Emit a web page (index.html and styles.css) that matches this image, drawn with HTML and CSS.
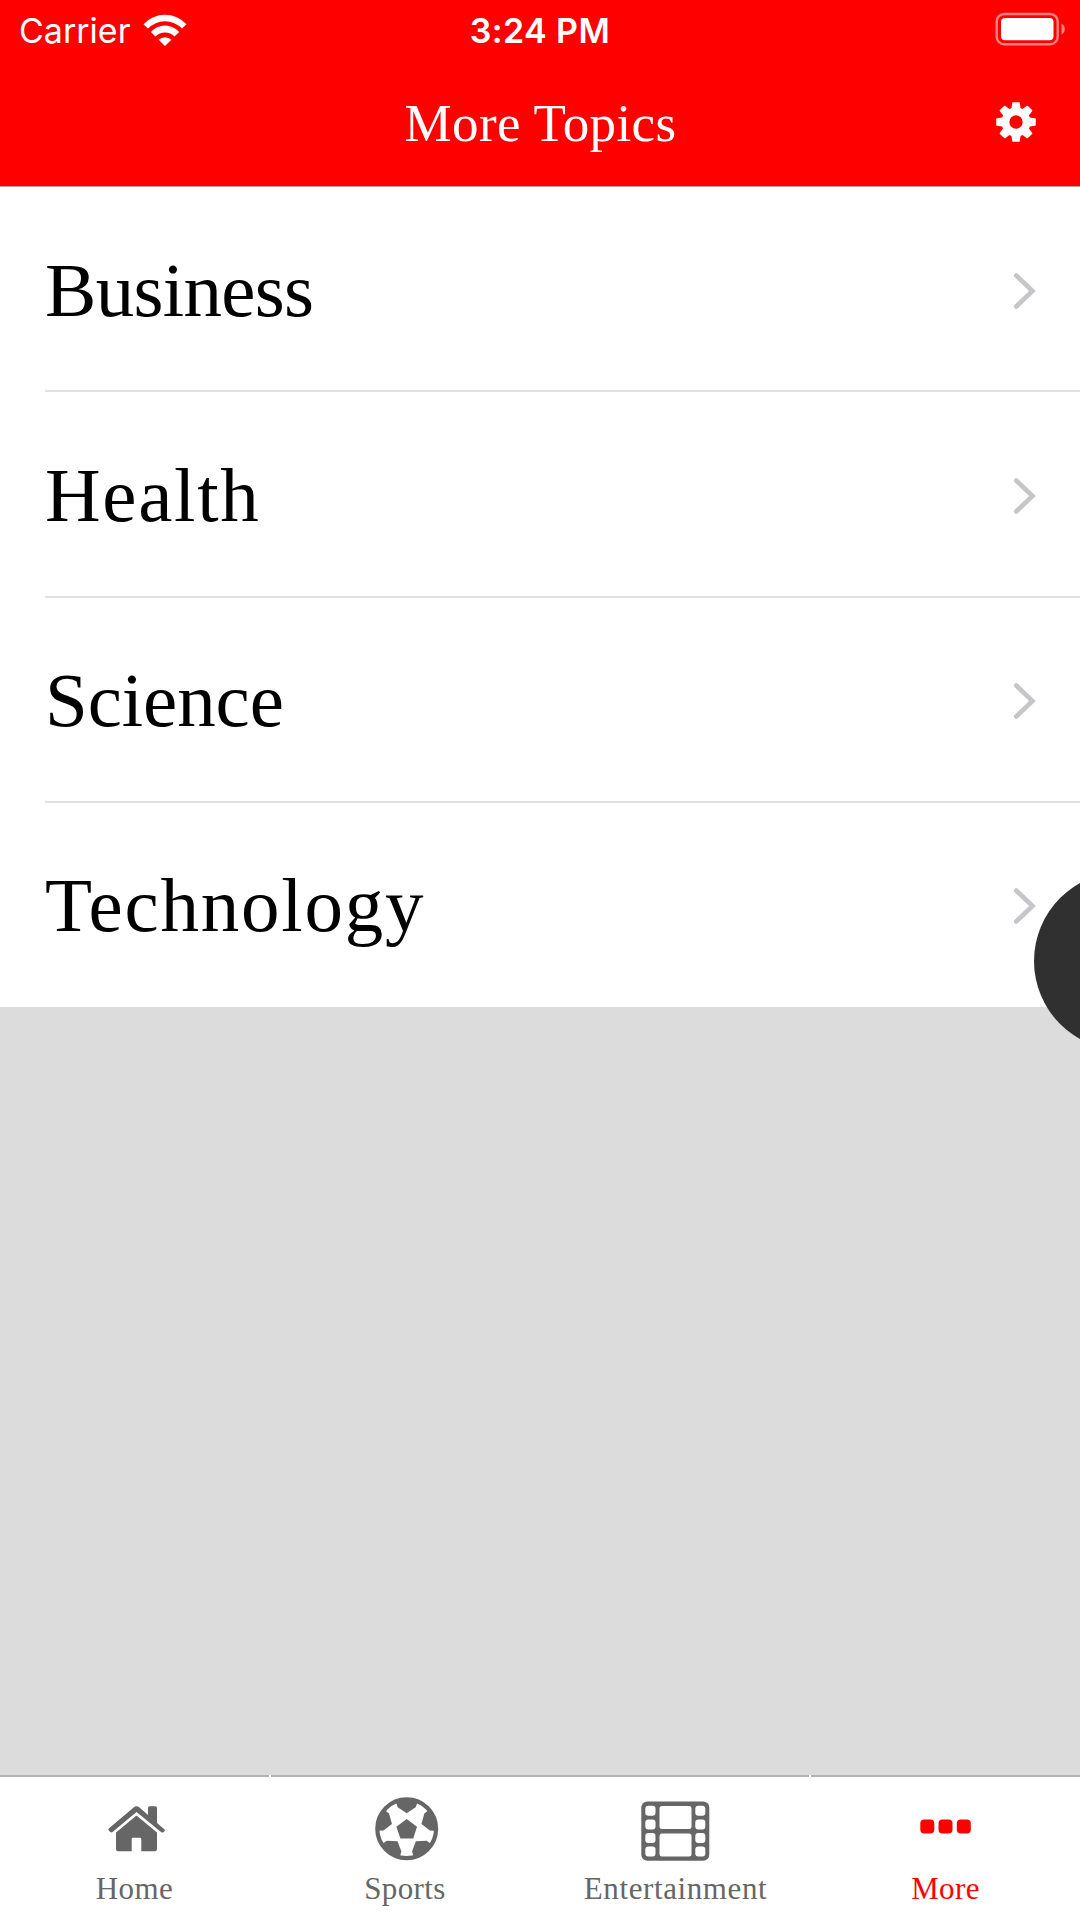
FILE: index.html
```html
<!DOCTYPE html>
<html lang="en">
<head>
<meta charset="utf-8">
<title>More Topics</title>
<link rel="stylesheet" href="styles.css">
</head>
<body>
<div class="screen">
  <header class="header">
    <div class="status">
      <div class="status-left">
        <span class="carrier">Carrier</span>
        <svg class="wifi" viewBox="143 12 44 34"><path d="M143.5 23.2A29 29 0 0 1 186.5 23.2L182 27.6A23.5 23.5 0 0 0 148 27.6ZM150.8 31A19 19 0 0 1 179.2 31L174.5 35.6A13 13 0 0 0 155.5 35.6ZM158.6 38.8A9 9 0 0 1 171.4 38.8L165 45Z"/></svg>
      </div>
      <span class="time">3:24 PM</span>
      <svg class="battery" viewBox="994 10 72 36">
        <rect class="battery-shell" x="996.7" y="13" width="61" height="30.2" rx="7.5"/>
        <rect x="1001" y="17" width="52.5" height="22.2" rx="4"/>
        <path class="battery-cap" d="M1061.5 22.5Q1064.8 24 1064.8 28T1061.5 33.5Z"/>
      </svg>
    </div>
    <div class="navbar">
      <span></span>
      <h1 class="title">More Topics</h1>
      <svg class="gear" viewBox="-20 -20 40 40">
        <defs><path id="tooth" d="M-4.8 -12L-3.7 -19.2Q-3.6 -19.8 -3 -19.8H3Q3.6 -19.8 3.7 -19.2L4.8 -12Z"/></defs>
        <circle class="gear-ring" r="10.6"/>
        <use href="#tooth"/><use href="#tooth" transform="rotate(45)"/><use href="#tooth" transform="rotate(90)"/><use href="#tooth" transform="rotate(135)"/><use href="#tooth" transform="rotate(180)"/><use href="#tooth" transform="rotate(225)"/><use href="#tooth" transform="rotate(270)"/><use href="#tooth" transform="rotate(315)"/>
      </svg>
    </div>
  </header>

  <main class="content">
    <ul class="topics">
      <li class="topic"><span class="business">Business</span><svg class="chevron" viewBox="0 0 24 40"><path d="M4.2 4.5L20.5 20L4.2 35.5"/></svg></li>
      <li class="topic"><span class="health">Health</span><svg class="chevron" viewBox="0 0 24 40"><path d="M4.2 4.5L20.5 20L4.2 35.5"/></svg></li>
      <li class="topic"><span class="science">Science</span><svg class="chevron" viewBox="0 0 24 40"><path d="M4.2 4.5L20.5 20L4.2 35.5"/></svg></li>
      <li class="topic"><span class="technology">Technology</span><svg class="chevron" viewBox="0 0 24 40"><path d="M4.2 4.5L20.5 20L4.2 35.5"/></svg></li>
    </ul>
  </main>

  <nav class="tabs">
    <div class="tab">
      <svg class="icon" viewBox="99 1792 72 72">
        <path d="M148 1815V1808Q148 1806.3 149.7 1806.3H155.3Q157 1806.3 157 1808V1823L164.3 1829.2Q165.3 1830.2 164.5 1831.2L163.3 1832.2Q162.3 1833 161 1832L136.5 1812L112.5 1832Q111.3 1832.8 110.3 1832L108.7 1830.5Q107.7 1829.5 108.8 1828.5L133.3 1807.7Q136.5 1805 139.7 1807.7Z"/>
        <path d="M136.5 1815.5L157 1832.5V1849.3Q157 1851.3 155 1851.3H141.3V1839Q141.3 1837.7 140 1837.7H133Q131.7 1837.7 131.7 1839V1851.3H118Q116 1851.3 116 1849.3V1832.5Z"/>
      </svg>
      <span class="label">Home</span>
    </div>
    <div class="tab">
      <svg class="icon" viewBox="370 1792 72 72">
        <defs>
          <clipPath id="ball"><circle cx="406.7" cy="1828.7" r="30.5"/></clipPath>
          <path id="patch" d="M394 1797L397.7 1807.2L406.7 1813.2L415.7 1807.2L419.4 1797Z"/>
        </defs>
        <circle class="ball-rim" cx="406.7" cy="1828.7" r="29.4"/>
        <path d="M406.7 1819L417 1826.8L413.2 1838.6H400.4L396.4 1826.8Z"/>
        <g clip-path="url(#ball)">
          <use href="#patch"/><use href="#patch" transform="rotate(72 406.7 1828.7)"/><use href="#patch" transform="rotate(144 406.7 1828.7)"/><use href="#patch" transform="rotate(216 406.7 1828.7)"/><use href="#patch" transform="rotate(288 406.7 1828.7)"/>
        </g>
      </svg>
      <span class="label sports">Sports</span>
    </div>
    <div class="tab">
      <svg class="icon" viewBox="639 1792 72 72">
        <rect x="641.3" y="1801.5" width="68" height="59.3" rx="6"/>
        <g class="hole">
          <rect x="659.5" y="1806" width="32" height="23" rx="2.5"/><rect x="659.5" y="1833.4" width="32" height="23" rx="2.5"/>
          <rect x="645.3" y="1805.8" width="10.2" height="10" rx="3"/><rect x="645.3" y="1819.4" width="10.2" height="10" rx="3"/><rect x="645.3" y="1833" width="10.2" height="10" rx="3"/><rect x="645.3" y="1846.6" width="10.2" height="10" rx="3"/>
          <rect x="695.3" y="1805.8" width="10" height="10" rx="3"/><rect x="695.3" y="1819.4" width="10" height="10" rx="3"/><rect x="695.3" y="1833" width="10" height="10" rx="3"/><rect x="695.3" y="1846.6" width="10" height="10" rx="3"/>
        </g>
      </svg>
      <span class="label entertainment">Entertainment</span>
    </div>
    <div class="tab active">
      <svg class="icon" viewBox="910 1792 72 72"><rect x="920.3" y="1819.5" width="14" height="14" rx="4"/><rect x="938.5" y="1819.5" width="14" height="14" rx="4"/><rect x="956.8" y="1819.5" width="14" height="14" rx="4"/></svg>
      <span class="label">More</span>
    </div>
  </nav>
  <div class="bubble"></div>
</div>
</body>
</html>
```
FILE: styles.css
```css
* { box-sizing: border-box; }
body { margin: 0; background: #dcdcdc; }
svg { display: block; flex: none; }

.screen {
  position: relative;
  display: flex;
  flex-direction: column;
  width: 1080px;
  height: 1920px;
  overflow: hidden;
  background: #dcdcdc;
  font-family: "Baskerville", "Liberation Serif", serif;
}

.header {
  height: 187px;
  background: #f00;
  color: #fff;
  fill: #fff;
  border-bottom: 1px solid #b8a0a0;
}
.status {
  display: grid;
  grid-template-columns: 1fr auto 1fr;
  align-items: center;
  height: 58px;
  padding: 0 14px 0 19px;
  font: 34px/58px "Inter", sans-serif;
}
.status-left { display: flex; align-items: center; gap: 13px; }
.carrier { width: 111px; padding-top: 2px; }
.wifi { width: 44px; height: 34px; }
.time { padding-top: 2px; font-weight: 600; letter-spacing: 0.4px; margin-left: -5px; }
.battery { width: 72px; height: 36px; justify-self: end; margin-bottom: 2px; }
.battery-shell { fill: none; stroke: #ff8080; stroke-width: 2.4; }
.battery-cap { fill: #ff8080; }

.navbar {
  display: grid;
  grid-template-columns: 1fr auto 1fr;
  align-items: center;
  height: 128px;
  padding: 0 44px 0 45px;
}
.title { margin: 2px 0 0; font-size: 53px; font-weight: 400; line-height: 60px; letter-spacing: 0.4px; }
.gear { width: 40px; height: 40px; justify-self: end; }
.gear-ring { fill: none; stroke: #fff; stroke-width: 7.8; }

.content { flex: 1; }
.topics { margin: 0; padding: 0; list-style: none; background: #fff; }
.topic {
  display: flex;
  align-items: center;
  justify-content: space-between;
  height: 205.6px;
  padding: 0 44px 0 45px;
  font-size: 77px;
  line-height: 90px;
  color: #000;
  background: linear-gradient(#e1e1e3, #e1e1e3) 45px 100% / 100% 2px no-repeat;
}
.topic:first-child { height: 205px; }
.topic:last-child { height: 203.8px; background: none; }
.topic span { margin-bottom: 0; }
.business { letter-spacing: -0.7px; }
.health { letter-spacing: 1.7px; }
.science { letter-spacing: -0.1px; }
.technology { letter-spacing: 1.8px; }
.chevron { width: 24px; height: 40px; margin-top: 2px; fill: none; stroke: #c5c5ca; stroke-width: 4.6; stroke-linecap: round; }

.tabs {
  display: grid;
  grid-template-columns: repeat(4, 1fr);
  height: 145px;
  background: #fff;
}
.tab {
  display: flex;
  flex-direction: column;
  align-items: center;
  gap: 7px;
  padding-top: 15px;
  border-top: 2px solid #b4b4b4;
  color: #666;
  fill: #666;
}
.tab:nth-child(odd) { margin-right: 1px; }
.tab:nth-child(even) { margin-left: 1px; }
.tab:nth-child(2) { margin-right: -1px; }
.icon { width: 72px; height: 72px; }
.label { font-size: 31px; line-height: 36px; letter-spacing: 0.4px; }
.sports { margin-left: -2px; }
.entertainment { margin-left: 2px; letter-spacing: 0.6px; }
.ball-rim { fill: none; stroke: #666; stroke-width: 4.2; }
.hole { fill: #fff; }
.active { color: #f00; fill: #f00; }

/* Floating button resting half off the right edge */
.bubble {
  position: absolute;
  top: 872px;
  left: 1034px;
  width: 178px;
  height: 178px;
  border-radius: 50%;
  background: #303030;
}
```
